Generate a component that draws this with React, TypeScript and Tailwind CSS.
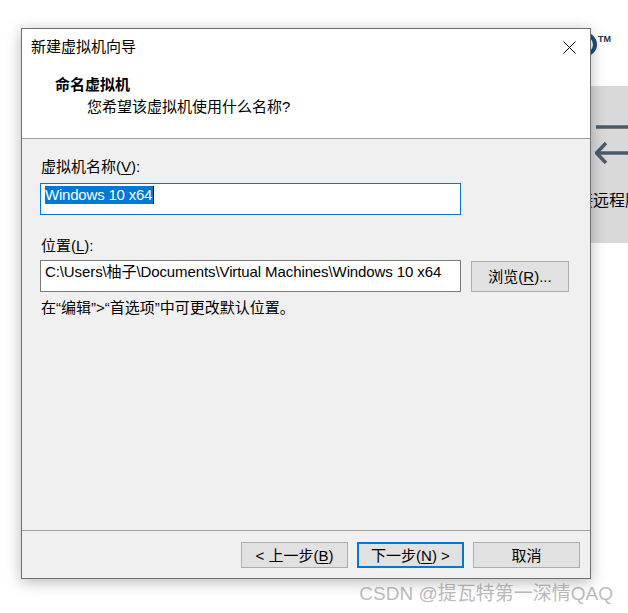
import { ReactNode } from 'react';

const FONT = "font-['Liberation_Sans','Noto_Sans_CJK_SC',sans-serif]";

// 带下划线助记键的文字，如 虚拟机名称(V):
function Mnemonic({ before, k, after }: { before: string; k: string; after: string }) {
  return (
    <span>
      {before}
      <span className="underline underline-offset-2">{k}</span>
      {after}
    </span>
  );
}

function Button({ children, primary = false, className = '' }: { children: ReactNode; primary?: boolean; className?: string }) {
  return (
    <button
      className={`flex items-center justify-center bg-[#e1e1e1] text-[15px] text-black leading-none ${
        primary ? 'border-2 border-[#0078d7]' : 'border border-[#adadad]'
      } ${className}`}
    >
      {children}
    </button>
  );
}

// 背景里的 VMware 主窗口（被对话框遮住的部分）
function Backdrop() {
  return (
    <>
      {/* logo 末尾的 O，只露出右边一小段 */}
      <svg className="absolute left-[560px] top-[28px]" width="40" height="34" viewBox="0 0 40 34">
        <ellipse cx="24" cy="16.5" rx="11" ry="10.5" fill="none" stroke="#1d4a86" strokeWidth="4" />
      </svg>
      <div className="absolute left-[598px] top-[35px] text-[9px] font-bold text-[#1d3358] leading-none font-['Liberation_Sans',sans-serif]">
        TM
      </div>
      <div className="absolute left-[560px] top-[86px] w-[80px] h-[157px] bg-[#d9d9d9]">
        <svg className="absolute left-[35px] top-[38px]" width="40" height="40" viewBox="0 0 40 40">
          <line x1="1" y1="3" x2="40" y2="3" stroke="#4b5b69" strokeWidth="3.5" />
          <line x1="1" y1="29" x2="40" y2="29" stroke="#4b5b69" strokeWidth="3.5" />
          <polyline points="11,19 1.5,29 11,39" fill="none" stroke="#4b5b69" strokeWidth="3.5" />
        </svg>
        <div className="absolute left-[17px] top-[101px] text-[16px] text-black whitespace-nowrap font-['Noto_Sans_CJK_SC',sans-serif]">
          接远程服
        </div>
      </div>
    </>
  );
}

export default function App() {
  return (
    <div className={`relative w-[628px] h-[613px] bg-white overflow-hidden ${FONT}`}>
      <Backdrop />

      {/* 新建虚拟机向导 对话框 */}
      <div className="absolute left-[21px] top-[28px] w-[570px] h-[551px] flex flex-col border border-[#6f6f6f] bg-[#f0f0f0] shadow-[0_3px_14px_rgba(0,0,0,0.28)] z-10">
        {/* 标题栏 + 向导头部 */}
        <div className="bg-white">
          <div className="h-[36px] flex items-center justify-between pl-[9px] pr-[14px]">
            <span className="text-[15px] text-black">新建虚拟机向导</span>
            <svg width="13" height="13" viewBox="0 0 13 13">
              <path d="M0.5 0.5 L12.5 12.5 M12.5 0.5 L0.5 12.5" stroke="#000" strokeWidth="1" />
            </svg>
          </div>
          <div className="h-[73px] pt-[10px] pl-[33px]">
            <div className="text-[15px] font-bold leading-[20px] text-black">命名虚拟机</div>
            <div className="text-[15px] leading-[20px] text-black pl-[32px] mt-[2px]">您希望该虚拟机使用什么名称?</div>
          </div>
        </div>
        <div className="h-px bg-[#a0a0a0]" />

        {/* 主体 */}
        <div className="flex-1 pt-[18px] pl-[18px] text-[15px] text-black">
          <div className="leading-[20px] pl-px">
            <Mnemonic before="虚拟机名称(" k="V" after="):" />
          </div>
          <div className="mt-[6px] w-[421px] h-[32px] border border-[#0078d7] bg-white flex items-start pt-[2px] pl-[4px]">
            <span className="bg-[#0078d7] text-white leading-[18px] pr-px tracking-[-0.2px]">Windows 10 x64</span>
            <span className="w-px h-[18px] bg-black" />
          </div>

          <div className="mt-[21px] leading-[20px] pl-px">
            <Mnemonic before="位置(" k="L" after="):" />
          </div>
          <div className="mt-[4px] flex items-center gap-[10px]">
            <div className="w-[421px] h-[32px] border border-[#7a7a7a] bg-white pt-[2px] pl-[4px] leading-[18px] whitespace-nowrap overflow-hidden tracking-[-0.1px]">
              C:\Users\柚子\Documents\Virtual Machines\Windows 10 x64
            </div>
            <Button className="w-[98px] h-[31px]">
              <Mnemonic before="浏览(" k="R" after=")..." />
            </Button>
          </div>

          <div className="mt-[6px] leading-[20px] pl-px">在“编辑”&gt;“首选项”中可更改默认位置。</div>
        </div>

        {/* 底部按钮 */}
        <div className="h-px bg-[#a0a0a0]" />
        <div className="h-[47px] pt-[11px] pr-[10px] flex justify-end gap-[9px]">
          <Button className="w-[107px] h-[26px]">
            <Mnemonic before="< 上一步(" k="B" after=")" />
          </Button>
          <Button primary className="w-[107px] h-[26px]">
            <Mnemonic before="下一步(" k="N" after=") >" />
          </Button>
          <Button className="w-[107px] h-[26px]">取消</Button>
        </div>
      </div>

      {/* 水印 */}
      <div className="absolute right-[15px] top-[583px] text-[19px] leading-[22px] text-[#bdbdbd] whitespace-nowrap font-['Liberation_Sans','Noto_Sans_CJK_SC',sans-serif]">
        CSDN @提瓦特第一深情QAQ
      </div>
    </div>
  );
}
